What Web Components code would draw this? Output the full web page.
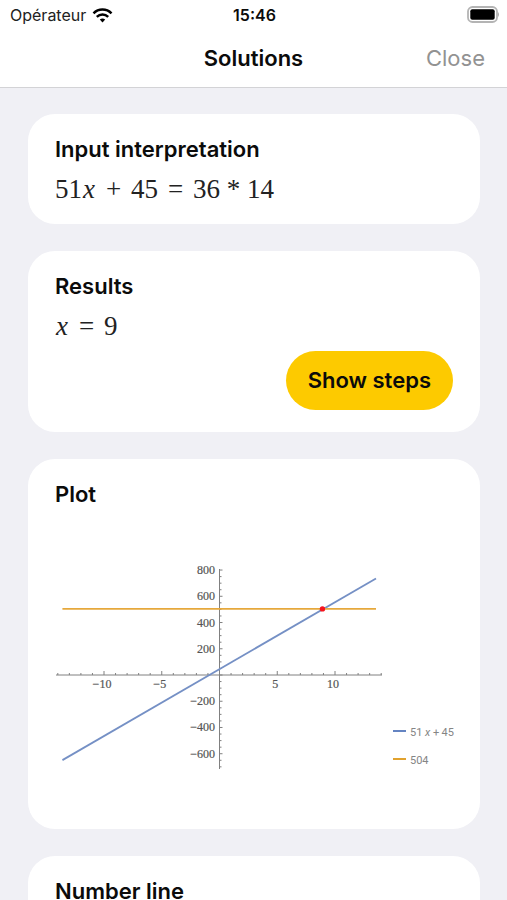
<!DOCTYPE html>
<html lang="en">
<head>
<meta charset="utf-8">
<meta name="viewport" content="width=device-width, initial-scale=1">
<title>Solutions</title>
<style>
  html, body { margin: 0; height: 100%; }
  body { font-family: Inter, "Liberation Sans", sans-serif; color: #0b0b0b; background: #f0f0f5; }
</style>
</head>
<body>
<solutions-screen>
  <status-bar slot="top" carrier="Opérateur" time="15:46"></status-bar>
  <nav-bar slot="top" heading="Solutions" action="Close"></nav-bar>
  <result-card heading="Input interpretation">
    <math-line expression="51 x + 45 = 36 * 14"></math-line>
  </result-card>
  <result-card heading="Results">
    <math-line expression="x = 9"></math-line>
    <pill-button slot="action">Show steps</pill-button>
  </result-card>
  <result-card heading="Plot">
    <line-plot></line-plot>
  </result-card>
  <result-card heading="Number line">
    <number-line></number-line>
  </result-card>
</solutions-screen>

<script>
const define = (name, render) => customElements.define(name, class extends HTMLElement {
  constructor() { super(); this.attachShadow({ mode: 'open' }); }
  connectedCallback() { this.shadowRoot.innerHTML = render(this); }
});

define('solutions-screen', () => `
  <style>
    :host { display: flex; flex-direction: column; height: 100vh; overflow: hidden; }
    header { background: #fff; border-bottom: 1px solid #d3d3d6; }
    main { flex: 1; min-height: 0; overflow-y: auto; scrollbar-width: none;
           display: flex; flex-direction: column; gap: 27px; padding: 26px 27px 27px 28px; }
  </style>
  <header><slot name="top"></slot></header>
  <main><slot></slot></main>`);

define('status-bar', el => `
  <style>
    :host { display: grid; grid-template-columns: 1fr auto 1fr; align-items: center; height: 30px; padding: 0 8px 0 10px; }
    .carrier { display: flex; align-items: center; gap: 6px; font-size: 16px; color: #222; }
    time { font-size: 16px; font-weight: 600; }
    .battery { justify-self: end; }
    svg { display: block; }
  </style>
  <span class="carrier">${el.getAttribute('carrier')}
    <svg width="21" height="15" viewBox="0 0 20 15" aria-hidden="true">
      <g fill="none" stroke="#000" stroke-width="2.5">
        <path d="M1 5.4C6 .3 14 .3 19 5.4"/>
        <path d="M4.3 8.9C7.5 5.8 12.5 5.8 15.7 8.9"/>
      </g>
      <path d="M7.3 11.6Q10 9.4 12.7 11.6L10 14.4Z"/>
    </svg>
  </span>
  <time>${el.getAttribute('time')}</time>
  <svg class="battery" width="33" height="18" viewBox="0 0 33 18" role="img" aria-label="Battery full">
    <rect x="2" y="1" width="29" height="15" rx="4.5" fill="#fff" stroke="#b4b4b4" stroke-width="1.8"/>
    <rect x="4.3" y="3.3" width="24.4" height="10.4" rx="2"/>
    <path d="M32 6Q34 8.500 32 11Z" fill="#aaa"/>
  </svg>`);

define('nav-bar', el => `
  <style>
    :host { display: grid; grid-template-columns: 1fr auto 1fr; align-items: center; box-sizing: border-box; height: 57px; padding: 0 22px 2px; }
    h1 { grid-column: 2; margin: 0; font-size: 22px; line-height: 28px; font-weight: 600; }
    button { justify-self: end; border: 0; padding: 0; background: none; color: #929292; font: 400 22px/28px Inter, sans-serif; }
  </style>
  <h1>${el.getAttribute('heading')}</h1>
  <button type="button">${el.getAttribute('action')}</button>`);

define('result-card', el => `
  <style>
    :host { display: block; flex: none; background: #fff; border-radius: 27px; padding: 22px 27px 20px; }
    h2 { margin: 0 0 12px; font-size: 22px; line-height: 27px; font-weight: 600; }
    ::slotted([slot="action"]) { margin: 10px 0 2px; }
  </style>
  <h2>${el.getAttribute('heading')}</h2>
  <slot></slot>
  <slot name="action"></slot>`);

define('math-line', el => `
  <style>
    :host { display: block; font: 27px/29px "Liberation Serif", serif; color: #222; white-space: nowrap; }
    .op { display: inline-block; width: 35px; text-align: center; }
    .star { width: 27px; }
    i { display: inline-block; width: 14px; text-align: center; }
  </style>
  ${el.getAttribute('expression').split(' ').map(t =>
    t === 'x' ? '<i>x</i>' : t === '*' ? '<span class="op star">*</span>' :
    /[+=]/.test(t) ? `<span class="op">${t}</span>` : `<span>${t}</span>`).join('')}`);

define('pill-button', () => `
  <style>
    :host { display: flex; justify-content: flex-end; }
    button { border: 0; border-radius: 30px; padding: 15px 22px; background: #fdca00; color: #0b0b0b;
             font: 600 22px/29px Inter, sans-serif; white-space: nowrap; }
  </style>
  <button type="button"><slot></slot></button>`);

define('line-plot', () => {
  const X = v => 164.5 + v * 11.55, Y = v => 155 - v * 0.1312;
  let ticks = '', labels = '';
  for (let v = -14; v <= 14; v++) ticks += `M${X(v)} 155v${v % 5 ? -2 : -4}`;
  for (let v = -700; v <= 800; v += 50) ticks += `M164.5 ${Y(v)}h${v % 200 ? 2 : 3}`;
  for (const v of [-10, -5, 5, 10])
    labels += `<text x="${X(v) - 2}" y="168" text-anchor="middle">${String(v).replace('-', '−')}</text>`;
  for (const v of [800, 600, 400, 200, -200, -400, -600])
    labels += `<text x="160" y="${Y(v) + 4}" text-anchor="end">${String(v).replace('-', '−')}</text>`;
  return `
  <style>
    :host { display: block; }
    svg { display: block; width: 100%; height: auto; overflow: visible; }
    text { font: 12px "Liberation Serif", serif; fill: #555; stroke: #555; stroke-width: .2; }
    .key text { font: 11px Roboto, sans-serif; fill: #858585; stroke: none; }
  </style>
  <svg viewBox="0 0 398 289" role="img" aria-label="Plot of 51 x + 45 and 504, crossing at x = 9">
    <path d="M1 155H327M164.5 49V249${ticks}" fill="none" stroke="#808080" stroke-width="1"/>
    ${labels}
    <g fill="none" stroke-width="1.8">
      <path d="M${X(-13.6)} ${Y(-649)}L${X(13.55)} ${Y(736)}" stroke="#7590c5"/>
      <path d="M${X(-13.6)} ${Y(504)}H${X(13.55)}" stroke="#e6a83c"/>
    </g>
    <circle cx="${X(9) - 1}" cy="${Y(504)}" r="2.7" fill="#f5141c"/>
    <g class="key">
      <path d="M338 211h13" stroke="#6484c2" stroke-width="2"/>
      <text x="355" y="216">51 <tspan font-style="italic">x</tspan> +&#8201;45</text>
      <path d="M338 239h13" stroke="#e1a22e" stroke-width="2"/>
      <text x="355" y="244">504</text>
    </g>
  </svg>`;
});

define('number-line', () => `
  <style>
    :host { display: block; }
    svg { display: block; width: 100%; height: auto; }
  </style>
  <svg viewBox="0 0 397 60" aria-hidden="true">
    <path d="M1 30H396" stroke="#777"/><circle cx="300" cy="30" r="3" fill="#7590c5"/>
  </svg>`);
</script>
</body>
</html>
